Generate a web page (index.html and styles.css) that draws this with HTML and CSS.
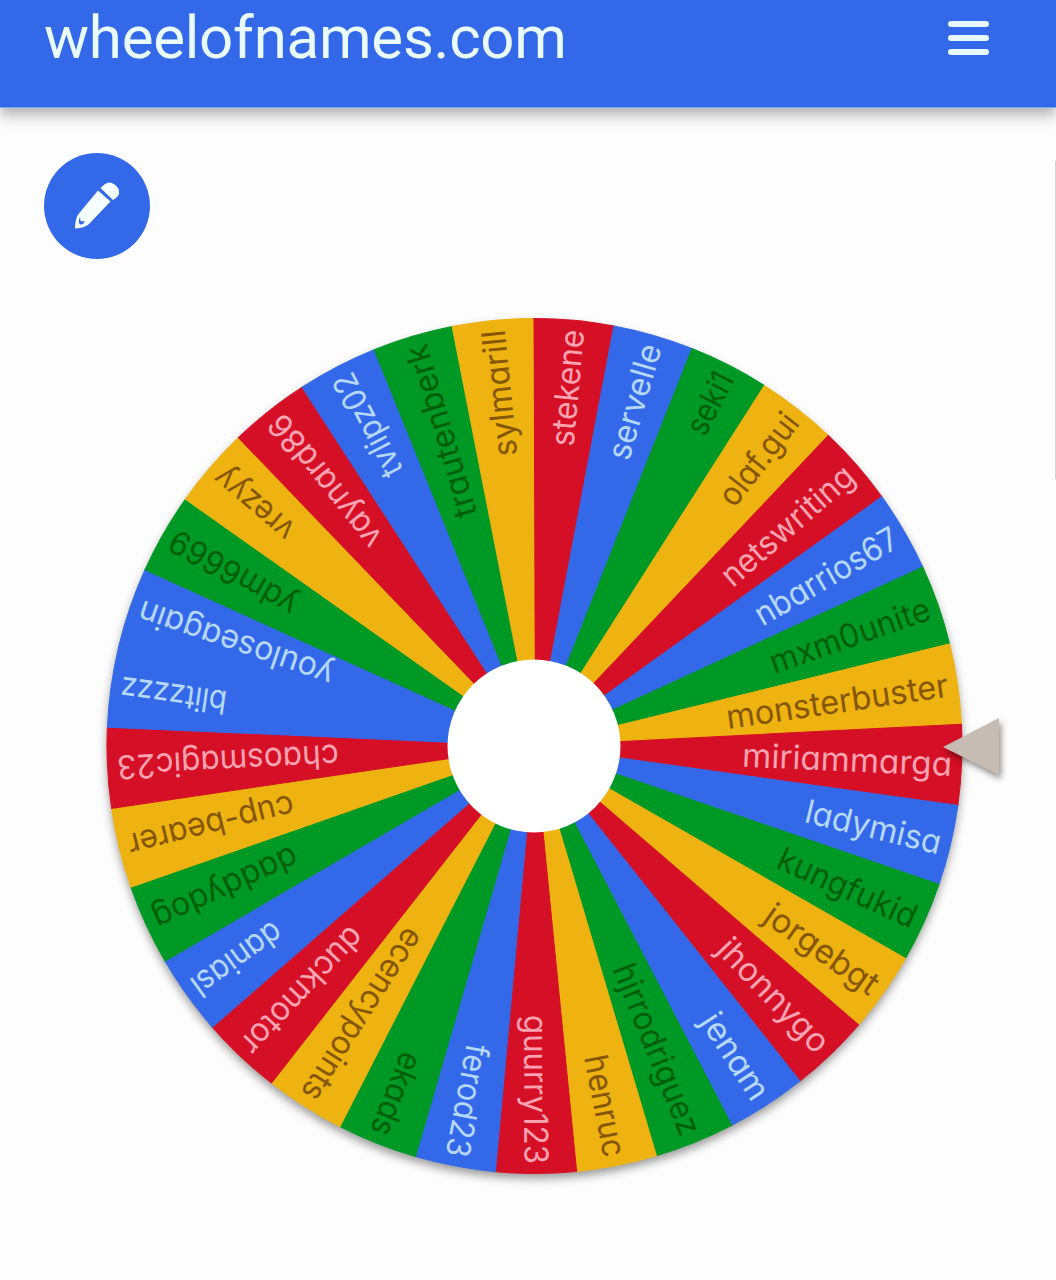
FILE: index.html
```html
<!DOCTYPE html>
<html lang="en">
<head>
<meta charset="UTF-8">
<meta name="viewport" content="width=device-width, initial-scale=1.0">
<title>wheelofnames.com</title>
<link rel="stylesheet" href="styles.css">
</head>
<body>

<header class="toolbar">
    <div class="title">wheelofnames.com</div>
    <button class="menu" aria-label="Menu">
        <span></span>
        <span></span>
        <span></span>
    </button>
</header>

<main>
    <button class="edit" aria-label="Edit names">
        <svg width="106" height="106" viewBox="0 0 106 106">
            <path d="M54 37.5 L66.5 48.500 L45 71 Q41 75 31 75.500 Q31 66 34.500 61 Z"/>
            <path d="M56.500 35 L61 31 Q65 28 70 31 Q76 35 75 41 Q74 44 69 47 Z"/>
            <path class="tip" d="M36 64 L36.500 68 L41 68.500 Q39 72 36 71.500 Q33.500 69 36 64 Z"/>
        </svg>
    </button>
    <svg class="wheel" id="wheel" width="1056" height="900" viewBox="0 0 1056 900">
        <circle class="disc" cx="534.5" cy="446" r="427.5"/>
        <g id="slices"></g>
        <circle class="hub" cx="534" cy="446" r="86.5"/>
        <path class="pointer" d="M943 447 L999 418 V475 Z"/>
    </svg>
    <div class="scrollbar"></div>
</main>

<script>
    const svgNS = 'http://www.w3.org/2000/svg';
    const slices = document.getElementById('slices');
    const radius = 427.5;
    const startAngle = -90.2;

    // name, colour, length of the label along the radius
    const entries = [
        ['stekene', 'red', 117],
        ['servelle', 'blue', 119],
        ['seki1', 'green', 66],
        ['olaf.gui', 'gold', 108],
        ['netswriting', 'red', 165],
        ['nbarrios67', 'blue', 161],
        ['mxm0unite', 'green', 168],
        ['monsterbuster', 'gold', 224],
        ['miriammarga', 'red', 210],
        ['ladymisa', 'blue', 139],
        ['kungfukid', 'green', 149],
        ['jorgebgt', 'gold', 132],
        ['jhonnygo', 'red', 145],
        ['jenam', 'blue', 97],
        ['hjrrodriguez', 'green', 182],
        ['henruc', 'gold', 103],
        ['guurry123', 'red', 149],
        ['ferod23', 'blue', 114],
        ['ekads', 'green', 87],
        ['ecencypoints', 'gold', 198],
        ['duckmotor', 'red', 162],
        ['daniasl', 'blue', 104],
        ['daddydog', 'green', 156],
        ['cup-bearer', 'gold', 170],
        ['chaosmagic23', 'red', 222],
        ['blitzzzz', 'blue', 107],
        ['youloseagain', 'blue', 204],
        ['ydm6669', 'green', 141],
        ['vrezyy', 'gold', 95],
        ['vaynard86', 'red', 161],
        ['tvlipz02', 'blue', 113],
        ['trautenberk', 'green', 179],
        ['sylmarill', 'gold', 127]
    ];

    const step = 360 / entries.length;

    entries.forEach((entry, i) => {
        const [name, color, length] = entry;
        const half = step / 2 * Math.PI / 180;
        const x = radius * Math.cos(half);
        const y = radius * Math.sin(half);

        const g = document.createElementNS(svgNS, 'g');
        g.setAttribute('class', color);
        g.setAttribute('transform', `translate(534.5 446) rotate(${startAngle + (i + 0.5) * step})`);

        const path = document.createElementNS(svgNS, 'path');
        path.setAttribute('d', `M0 0 L${x} ${-y} A${radius} ${radius} 0 0 1 ${x} ${y} Z`);
        g.appendChild(path);

        const text = document.createElementNS(svgNS, 'text');
        text.setAttribute('x', 418 - length);
        text.setAttribute('y', 11.5);
        text.setAttribute('textLength', length);
        text.setAttribute('lengthAdjust', 'spacingAndGlyphs');
        text.textContent = name;
        g.appendChild(text);

        slices.appendChild(g);
    });
</script>

</body>
</html>
```
FILE: styles.css
```css
body {
    margin: 0;
    height: 1280px;
    overflow: hidden;
    background-color: #fdfdfd;
    font-family: Roboto, sans-serif;
}
button {
    border: none;
    padding: 0;
    cursor: pointer;
}
.toolbar {
    display: flex;
    justify-content: space-between;
    align-items: flex-start;
    box-sizing: border-box;
    height: 108px;
    padding: 0 67px 0 44px;
    background-color: #3369e8;
    border-bottom: 1px solid #78a8f4;
    box-shadow: 0 6px 10px rgba(0, 0, 0, 0.22), 0 14px 14px rgba(0, 0, 0, 0.08);
}
.title {
    color: #e9fbff;
    font-size: 60px;
    line-height: 76px;
    letter-spacing: -0.25px;
}
.menu {
    display: flex;
    flex-direction: column;
    gap: 8px;
    width: 41px;
    margin-top: 21px;
    background: none;
}
.menu span {
    height: 6px;
    border-radius: 3px;
    background-color: #e6faff;
}
main {
    position: relative;
    padding-top: 45px;
}
.edit {
    display: block;
    width: 106px;
    height: 106px;
    margin-left: 44px;
    border-radius: 50%;
    background-color: #3369e8;
}
.edit svg {
    display: block;
    fill: #f5ffff;
}
.edit .tip {
    fill: #3369e8;
}
.wheel {
    display: block;
    margin-top: 41px;
}
.disc {
    fill: #ffffff;
    filter: drop-shadow(0 5px 5px rgba(0, 0, 0, 0.4));
}
.hub {
    fill: #ffffff;
}
.wheel text {
    font-family: Inter, Lato, sans-serif;
    font-size: 33px;
    /* single-storey a */
    font-feature-settings: "cv11";
}
.red path {
    fill: #d50f25;
    stroke: #d50f25;
}
.red text {
    fill: #ffa3b0;
}
.blue path {
    fill: #3369e8;
    stroke: #3369e8;
}
.blue text {
    fill: #b4d8ff;
}
.green path {
    fill: #009925;
    stroke: #009925;
}
.green text {
    fill: #005f08;
}
.gold path {
    fill: #eeb211;
    stroke: #eeb211;
}
.gold text {
    fill: #865600;
}
.pointer {
    fill: #c6bcb3;
    filter: drop-shadow(2px 4px 3px rgba(0, 0, 0, 0.45));
}
.scrollbar {
    position: absolute;
    top: 53px;
    right: 0;
    width: 1px;
    height: 318px;
    background-color: #d2d2d2;
}
```
